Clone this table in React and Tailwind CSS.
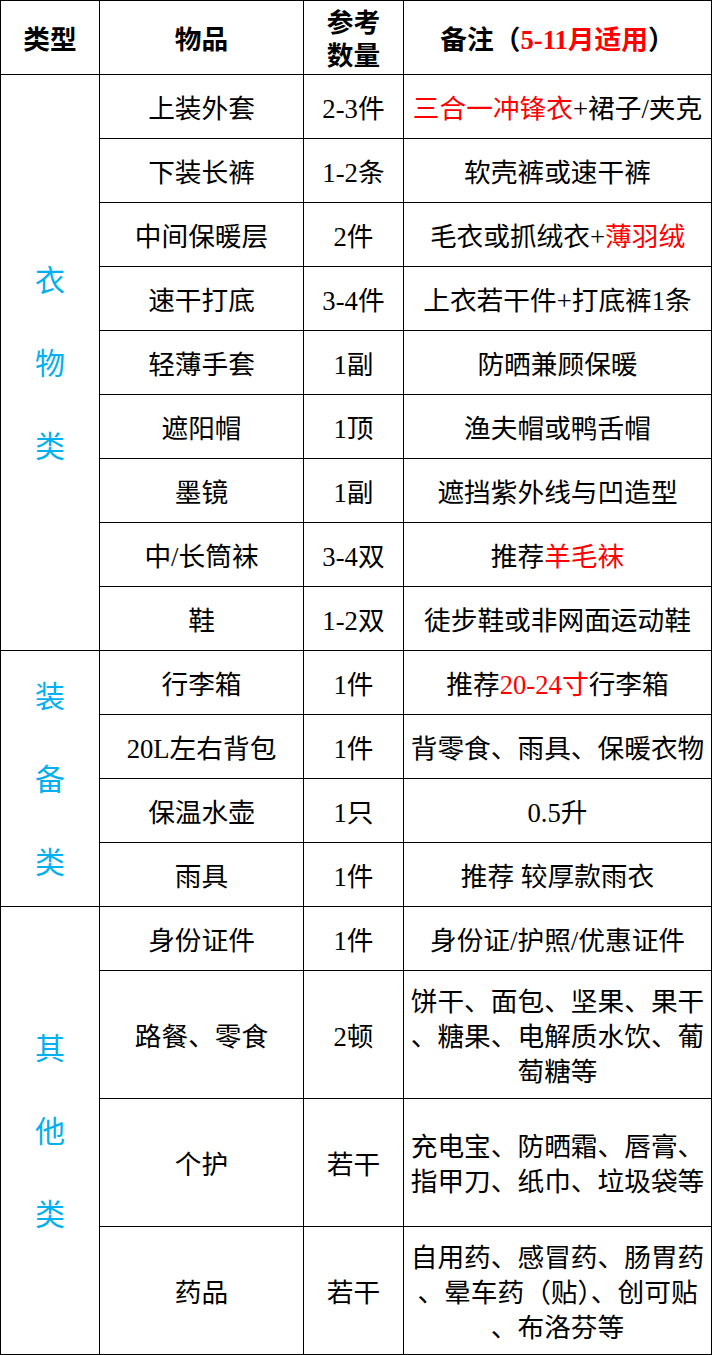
const font = {
  fontFamily: '"Liberation Serif", "Noto Sans CJK SC", serif',
};

function Red({ children }) {
  return <span className="text-[#ff0000]">{children}</span>;
}

function Category({ chars, rows }) {
  return (
    <td rowSpan={rows} className="border border-black p-0 pt-[2px] align-middle">
      <div className="flex flex-col items-center gap-[50px] text-[30px] leading-[33px] text-[#00b0f0]">
        {chars.map((c, i) => (
          <span key={i}>{c}</span>
        ))}
      </div>
    </td>
  );
}

function Cell({ children, h = 'h-[64px]' }) {
  return (
    <td className={`border border-black p-0 pt-[5px] text-center align-middle ${h}`}>
      {children}
    </td>
  );
}

function Lines({ lines }) {
  return (
    <div className="flex flex-col items-center leading-[35px] whitespace-nowrap">
      {lines.map((l, i) => (
        <span key={i}>{l}</span>
      ))}
    </div>
  );
}

const clothes = [
  ['上装外套', '2-3件', <><Red>三合一冲锋衣</Red>+裙子/夹克</>],
  ['下装长裤', '1-2条', '软壳裤或速干裤'],
  ['中间保暖层', '2件', <>毛衣或抓绒衣+<Red>薄羽绒</Red></>],
  ['速干打底', '3-4件', '上衣若干件+打底裤1条'],
  ['轻薄手套', '1副', '防晒兼顾保暖'],
  ['遮阳帽', '1顶', '渔夫帽或鸭舌帽'],
  ['墨镜', '1副', '遮挡紫外线与凹造型'],
  ['中/长筒袜', '3-4双', <>推荐<Red>羊毛袜</Red></>],
  ['鞋', '1-2双', '徒步鞋或非网面运动鞋'],
];

const gear = [
  ['行李箱', '1件', <>推荐<Red>20-24寸</Red>行李箱</>],
  ['20L左右背包', '1件', '背零食、雨具、保暖衣物'],
  ['保温水壶', '1只', '0.5升'],
  ['雨具', '1件', '推荐 较厚款雨衣'],
];

const others = [
  ['身份证件', '1件', '身份证/护照/优惠证件', false],
  ['路餐、零食', '2顿', <Lines lines={['饼干、面包、坚果、果干', '、糖果、电解质水饮、葡', '萄糖等']} />, true],
  ['个护', '若干', <Lines lines={['充电宝、防晒霜、唇膏、', '指甲刀、纸巾、垃圾袋等']} />, true],
  ['药品', '若干', <Lines lines={['自用药、感冒药、肠胃药', '、晕车药（贴）、创可贴', '、布洛芬等']} />, true],
];

function Group({ chars, items }) {
  return items.map(([name, qty, note, tall], i) => (
    <tr key={i}>
      {i === 0 && <Category chars={chars} rows={items.length} />}
      <Cell h={tall ? 'h-[128px]' : 'h-[64px]'}>{name}</Cell>
      <Cell h={tall ? 'h-[128px]' : 'h-[64px]'}>{qty}</Cell>
      <Cell h={tall ? 'h-[128px]' : 'h-[64px]'}>{note}</Cell>
    </tr>
  ));
}

export default function App() {
  return (
    <div className="bg-white w-[713px] h-[1355px]" style={font}>
      <table className="table-fixed border-collapse w-[711px] text-[26.7px] text-black">
        <colgroup>
          <col className="w-[99px]" />
          <col className="w-[204px]" />
          <col className="w-[100px]" />
          <col className="w-[308px]" />
        </colgroup>
        <thead>
          <tr className="font-bold">
            <th className="border border-black h-[74px] p-0 pt-[5px] text-center align-middle">类型</th>
            <th className="border border-black p-0 pt-[5px] text-center align-middle">物品</th>
            <th className="border border-black p-0 pt-[5px] text-center align-middle leading-[33px]">
              参考
              <br />
              数量
            </th>
            <th className="border border-black p-0 pt-[5px] text-center align-middle">
              备注（<Red>5-11月适用</Red>）
            </th>
          </tr>
        </thead>
        <tbody>
          <Group chars={['衣', '物', '类']} items={clothes} />
          <Group chars={['装', '备', '类']} items={gear} />
          <Group chars={['其', '他', '类']} items={others} />
        </tbody>
      </table>
    </div>
  );
}
